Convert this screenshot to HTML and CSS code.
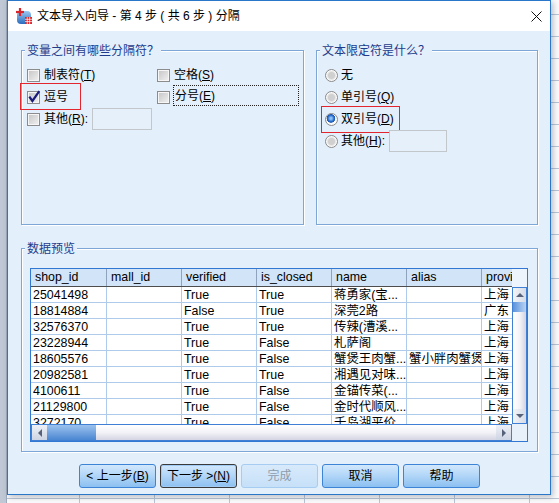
FILE: index.html
```html
<!DOCTYPE html>
<html lang="zh-CN">
<head>
<meta charset="utf-8">
<title>文本导入向导</title>
<link rel="stylesheet" href="styles.css">
</head>
<body>
<div class="desk">
  <div class="dialog">
    <div class="titlebar">
      <svg class="appicon" width="16" height="16" viewBox="0 0 16 16">
        <defs>
          <linearGradient id="ig" x1="0" y1="0" x2="0" y2="1">
            <stop offset="0" stop-color="#9cc8f0"/>
            <stop offset="1" stop-color="#2a6cbf"/>
          </linearGradient>
        </defs>
        <rect x="1" y="3" width="14" height="13" rx="4" fill="url(#ig)"/>
        <rect x="9" y="9" width="7" height="7" fill="#d9262c"/>
        <path d="M11.3 9v7M13.6 9v7M9 11.3h7M9 13.6h7" stroke="#fff" stroke-width="0.7"/>
        <rect x="2.9" y="0" width="2.2" height="8" fill="#d9262c"/>
        <rect x="0" y="2.9" width="8" height="2.2" fill="#d9262c"/>
      </svg>
      <span class="title">文本导入向导 - 第 4 步 ( 共 6 步 ) 分隔</span>
      <svg class="close" width="11" height="11" viewBox="0 0 11 11"><path d="M0.5 0.5L10.5 10.5M10.5 0.5L0.5 10.5" stroke="#111" stroke-width="1"/></svg>
    </div>

    <div class="content">
      <div class="top">
        <div class="group g-delim">
          <span class="legend">变量之间有哪些分隔符？</span>
          <div class="opts">
            <label class="opt"><span class="cb"></span><span class="lbl">制表符(<u>T</u>)</span></label>
            <label class="opt"><span class="cb"></span><span class="lbl">空格(<u>S</u>)</span></label>
            <label class="opt mark-comma"><span class="cb"><svg class="tick" width="13" height="13" viewBox="0 0 13 13"><path d="M2.3 6.6L5.4 11L12.3 1.2" fill="none" stroke="#1a1a7c" stroke-width="2.2"/></svg></span><span class="lbl">逗号</span></label>
            <label class="opt"><span class="cb"></span><span class="lbl focusbox">分号(<u>E</u>)</span></label>
            <label class="opt"><span class="cb"></span><span class="lbl">其他(<u>R</u>):</span><span class="tbox"></span></label>
          </div>
        </div>

        <div class="group g-qual">
          <span class="legend">文本限定符是什么？</span>
          <div class="radios">
            <label class="opt r"><span class="rb"></span><span class="lbl">无</span></label>
            <label class="opt r"><span class="rb"></span><span class="lbl">单引号(<u>Q</u>)</span></label>
            <label class="opt r mark-dq"><span class="rb on"></span><span class="lbl">双引号(<u>D</u>)</span></label>
            <label class="opt r"><span class="rb"></span><span class="lbl">其他(<u>H</u>):</span><span class="tbox tbox-h"></span></label>
          </div>
        </div>
      </div>

      <div class="group g-data">
        <span class="legend">数据预览</span>
        <div class="preview">
          <div class="grid-data">
            <div class="thead">
              <div class="th c1">shop_id</div><div class="th">mall_id</div><div class="th">verified</div><div class="th">is_closed</div><div class="th">name</div><div class="th">alias</div><div class="th">province</div>
            </div>
            <div class="tr"><div class="td c1">25041498</div><div class="td"></div><div class="td">True</div><div class="td">True</div><div class="td">蒋勇家(宝...</div><div class="td"></div><div class="td">上海</div></div>
            <div class="tr"><div class="td c1">18814884</div><div class="td"></div><div class="td">False</div><div class="td">True</div><div class="td">深莞2路</div><div class="td"></div><div class="td">广东</div></div>
            <div class="tr"><div class="td c1">32576370</div><div class="td"></div><div class="td">True</div><div class="td">True</div><div class="td">传辣(漕溪...</div><div class="td"></div><div class="td">上海</div></div>
            <div class="tr"><div class="td c1">23228944</div><div class="td"></div><div class="td">True</div><div class="td">False</div><div class="td">札萨阁</div><div class="td"></div><div class="td">上海</div></div>
            <div class="tr"><div class="td c1">18605576</div><div class="td"></div><div class="td">True</div><div class="td">False</div><div class="td">蟹煲王肉蟹...</div><div class="td">蟹小胖肉蟹煲</div><div class="td">上海</div></div>
            <div class="tr"><div class="td c1">20982581</div><div class="td"></div><div class="td">True</div><div class="td">True</div><div class="td">湘遇见对味...</div><div class="td"></div><div class="td">上海</div></div>
            <div class="tr"><div class="td c1">4100611</div><div class="td"></div><div class="td">True</div><div class="td">False</div><div class="td">金锚传菜(...</div><div class="td"></div><div class="td">上海</div></div>
            <div class="tr"><div class="td c1">21129800</div><div class="td"></div><div class="td">True</div><div class="td">False</div><div class="td">金时代顺风...</div><div class="td"></div><div class="td">上海</div></div>
            <div class="tr"><div class="td c1">3272170</div><div class="td"></div><div class="td">True</div><div class="td">False</div><div class="td">千岛湖平价...</div><div class="td"></div><div class="td">上海</div></div>
          </div>
          <div class="sc-head"></div>
          <div class="vscroll">
            <div class="sbtn"><span class="tri-up"></span></div>
            <div class="vthumb"></div>
            <div class="vtrack"></div>
            <div class="sbtn"><span class="tri-down"></span></div>
          </div>
          <div class="hscroll">
            <div class="sbtn h"><span class="tri-left"></span></div>
            <div class="hthumb"></div>
            <div class="htrack"></div>
            <div class="sbtn h"><span class="tri-right"></span></div>
          </div>
          <div class="corner"></div>
        </div>
      </div>

      <div class="buttons">
        <button class="btn">&lt; 上一步(<u>B</u>)</button>
        <button class="btn default">下一步 &gt;(<u>N</u>)</button>
        <button class="btn disabled">完成</button>
        <button class="btn">取消</button>
        <button class="btn">帮助</button>
      </div>
    </div>
  </div>
</div>
</body>
</html>
```

FILE: styles.css
```css
* { box-sizing: border-box; }

body {
  margin: 0;
  width: 559px;
  height: 503px;
  overflow: hidden;
  font-family: "Liberation Sans", "Noto Sans CJK SC", sans-serif;
  font-size: 12px;
  color: #000;
  background: #fbfbfc;
}

.desk {
  width: 559px;
  height: 503px;
  padding-left: 7px;
  background:
    linear-gradient(to right, #bfc8d4 0 6px, #9eabbd 6px 7px, transparent 7px),
    repeating-linear-gradient(to bottom, transparent 0 14px, #b9c5d5 14px 15px, transparent 15px 22px),
    repeating-linear-gradient(to right, transparent 0 4px, #b9c5d5 4px 5px, transparent 5px 75px),
    #fbfbfc;
}

.dialog {
  width: 544px;
  height: 495px;
  border: 1px solid #2a77c9;
  background: #e3effb;
  box-shadow: 2px 2px 6px rgba(60, 70, 90, 0.35);
  display: flex;
  flex-direction: column;
}

.titlebar {
  height: 30px;
  flex: none;
  background: #fff;
  display: flex;
  align-items: center;
  padding: 0 8px 0 8px;
}

.appicon { flex: none; }

.title {
  margin-left: 5px;
  font-size: 12px;
  line-height: 16px;
  color: #000;
  white-space: nowrap;
}

.close { margin-left: auto; flex: none; }

.content {
  flex: 1;
  padding: 19px 12px 0 13px;
}

.top {
  display: flex;
  gap: 12px;
}

.group {
  position: relative;
  border: 1px solid #7ea7d8;
  box-shadow: inset 1px 1px 0 #fff, 1px 1px 0 #fff;
}

.legend {
  position: absolute;
  top: -9px;
  left: 3px;
  padding: 0 2px;
  background: #e3effb;
  line-height: 16px;
  font-family: "Noto Sans CJK SC", sans-serif;
  font-size: 12px;
  color: #1f3c8c;
  white-space: nowrap;
}

.g-delim {
  width: 283px;
  height: 175px;
  padding: 13px 0 0 5px;
}

.g-qual {
  width: 222px;
  height: 175px;
  padding: 13px 0 0 8px;
}

.opts {
  display: grid;
  grid-template-columns: 130px 1fr;
  grid-auto-rows: 22px;
}

.radios {
  display: grid;
  grid-auto-rows: 22px;
}

.opt {
  position: relative;
  display: flex;
  align-items: center;
  gap: 4px;
  white-space: nowrap;
  line-height: 16px;
}

.opt.r { gap: 3px; }

.lbl { white-space: nowrap; }

.opt u, .btn u { text-decoration: underline; text-underline-offset: 1px; }

.cb {
  position: relative;
  flex: none;
  width: 13px;
  height: 13px;
  border: 1px solid #8c8c8c;
  background: linear-gradient(135deg, #c4c4c4, #f2f2f2);
  box-shadow: inset 0 0 0 1px #f6f6f6;
}

.tick {
  position: absolute;
  left: -1px;
  top: -2px;
}

.rb {
  flex: none;
  width: 13px;
  height: 13px;
  border-radius: 50%;
  border: 1px solid #8a8a8a;
  background: radial-gradient(circle at 50% 50%, #d0d0d0 0 3px, #e6e6e6 4px, #fafafa 5px);
}

.rb.on {
  background: radial-gradient(circle at 45% 40%, #8cc0f5 0 1px, #2a6fd0 3px, #1b55b0 4px, #fafafa 4.6px);
}

.mark-comma::after {
  content: "";
  position: absolute;
  left: -7px;
  top: -3px;
  width: 59px;
  height: 25px;
  border: 1px solid #e3262d;
}

.mark-dq::after {
  content: "";
  position: absolute;
  left: -4px;
  top: -2px;
  width: 77px;
  height: 25px;
  border: 1px solid #e3262d;
}

.focusbox {
  align-self: flex-start;
  margin-top: -1px;
  margin-left: -1px;
  width: 126px;
  height: 21px;
  border: 1px dotted #222;
  padding: 2px 0 0 1px;
  line-height: 16px;
}

.tbox {
  display: block;
  flex: none;
  width: 60px;
  height: 22px;
  border: 1px solid #c2c7cc;
  background: #e6f0fa;
}

.tbox-h {
  width: 58px;
  margin-left: 1px;
}

.g-data {
  margin-top: 23px;
  height: 204px;
  padding: 19px 0 0 8px;
}

.preview {
  width: 498px;
  height: 174px;
  border: 1px solid #3277d2;
  background: #fff;
  display: grid;
  grid-template-columns: 481px 15px;
  grid-template-rows: 18px 137px 17px;
}

.grid-data {
  grid-column: 1;
  grid-row: 1 / span 2;
  overflow: hidden;
  font-size: 12.4px;
}

.thead {
  display: flex;
  height: 18px;
  background: #d2e4f8;
  border-bottom: 1px solid #4d4d4d;
}

.th {
  flex: none;
  width: 75px;
  border-right: 1px solid #8fa3bd;
  padding-left: 4px;
  line-height: 17px;
  white-space: nowrap;
  overflow: hidden;
}

.tr {
  display: flex;
  height: 16px;
  border-bottom: 1px solid #aecbec;
}

.td {
  flex: none;
  width: 75px;
  border-right: 1px solid #aecbec;
  padding-left: 2px;
  line-height: 16px;
  white-space: nowrap;
  overflow: hidden;
}

.c1 { width: 76px; }

.sc-head {
  grid-column: 2;
  grid-row: 1;
  background: #eef4fb;
}

.vscroll {
  grid-column: 2;
  grid-row: 2;
  border: 1px solid #3f7fd4;
  display: flex;
  flex-direction: column;
}

.sbtn {
  flex: none;
  height: 14px;
  display: flex;
  align-items: center;
  justify-content: center;
  background: linear-gradient(to right, #f2f4f8, #d6dbe6);
}

.sbtn.h {
  width: 15px;
  height: auto;
  background: linear-gradient(#eef1f7, #cdd4e2);
}

.tri-up {
  width: 0; height: 0;
  border-left: 4px solid transparent;
  border-right: 4px solid transparent;
  border-bottom: 4px solid #56627a;
}

.tri-down {
  width: 0; height: 0;
  border-left: 4px solid transparent;
  border-right: 4px solid transparent;
  border-top: 4px solid #56627a;
}

.tri-left {
  width: 0; height: 0;
  border-top: 4px solid transparent;
  border-bottom: 4px solid transparent;
  border-right: 4px solid #56627a;
}

.tri-right {
  width: 0; height: 0;
  border-top: 4px solid transparent;
  border-bottom: 4px solid transparent;
  border-left: 4px solid #56627a;
}

.vthumb {
  flex: none;
  height: 10px;
  background: linear-gradient(to right, #5b93da, #b8d3f3);
}

.vtrack {
  flex: 1;
  background: linear-gradient(to right, #ffffff, #f4f4f8 50%, #d3d3e3);
}

.hscroll {
  grid-column: 1;
  grid-row: 3;
  border: 1px solid #3f7fd4;
  display: flex;
}

.hthumb {
  flex: none;
  width: 49px;
  background: linear-gradient(#9cc2ee, #4a86d2);
}

.htrack {
  flex: 1;
  background: linear-gradient(#ffffff, #f2f2f7 50%, #d4d4e3);
}

.corner {
  grid-column: 2;
  grid-row: 3;
  background: #e8f0f9;
}

.buttons {
  margin-top: 12px;
  display: flex;
  justify-content: center;
  gap: 4px;
}

.btn {
  width: 77px;
  height: 24px;
  padding: 0;
  border: 1px solid #3d83d6;
  border-radius: 3px;
  background: linear-gradient(#d2e8fc, #b4d7f8 45%, #8cc0f1);
  font-family: "Liberation Sans", "Noto Sans CJK SC", sans-serif;
  font-size: 12px;
  line-height: 16px;
  color: #000;
}

.btn.default {
  border-color: #3a3a3a;
  box-shadow: inset 0 0 0 1px #9fcbf4;
}

.btn.disabled {
  border-color: #a6cdf1;
  background: linear-gradient(#d8eafb, #c6e0f8);
  color: #8e9cab;
}
```
